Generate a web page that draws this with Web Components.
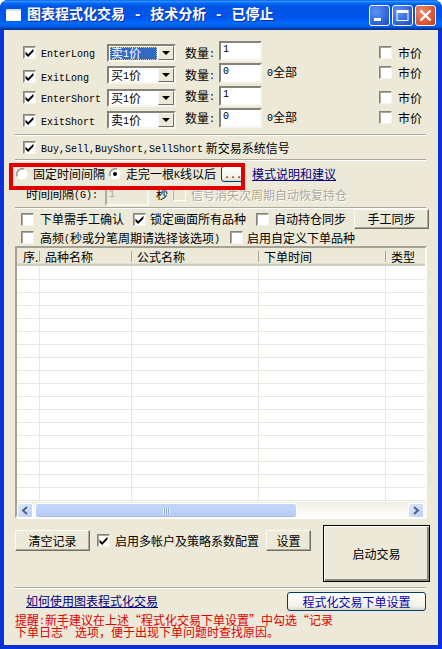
<!DOCTYPE html>
<html lang="zh-CN">
<head>
<meta charset="utf-8">
<title>图表程式化交易</title>
<style>
  html, body { margin: 0; background: #fff; }
  body { width: 442px; height: 649px; overflow: hidden; text-autospace: no-autospace; text-spacing-trim: space-all; }
</style>
<script>
  const UI_FONT = '"Noto Sans CJK SC", sans-serif'

  // small helper: registers an element with a shadow root built from css + html
  function define(tag, css, html) {
    customElements.define(tag, class extends HTMLElement {
      constructor() {
        super()
        this.attachShadow({ mode: 'open' })
      }
      connectedCallback() {
        const body = typeof html === 'function' ? html(this) : html
        this.shadowRoot.innerHTML = `<style>${css}</style>${body}`
      }
    })
  }

  // half width latin text, the dialog font draws these at 6px per char
  define('x-a', `:host { font: 10px/0 "Liberation Mono", monospace; vertical-align: 1px; }`, `<slot></slot>`)

  define('x-rule', `
    :host { display: block; height: 1px; margin: 0 12px 0 11px; background: #aca899; border-bottom: 1px solid #fff; }
  `, ``)

  const CHECK = `<svg width="9" height="9" viewBox="0 0 9 9"><path d="M0.5 3.6l2.6 2.6L8.5 0.8v2.8L3.1 9 0.5 6.4z" fill="#000"/></svg>`

  define('x-check', `
    :host { display: inline-flex; align-items: center; gap: var(--gap, 5px); font: 12px/12px ${UI_FONT}; white-space: nowrap; }
    .box {
      box-sizing: border-box; width: 13px; height: 13px; flex: none;
      display: flex; align-items: center; justify-content: center;
      background: #fff;
      border: 1px solid; border-color: #85837a #f4f3ec #f4f3ec #85837a;
      box-shadow: inset 1px 1px 0 #a9a79c;
    }
    :host([disabled]) .box { background: #ece9d8; border-color: #b5b2a4 #fff #fff #b5b2a4; box-shadow: none; }
    :host([disabled]) { color: #aca899; text-shadow: 1px 1px 0 #fff; }
  `, el => `<span class="box">${el.hasAttribute('checked') ? CHECK : ''}</span><span><slot></slot></span>`)

  define('x-radio', `
    :host { display: inline-flex; align-items: center; gap: 5px; font: 12px/12px ${UI_FONT}; white-space: nowrap; }
    svg { flex: none; display: block; }
  `, el => `<svg width="12" height="12" viewBox="0 0 12 12">
      <circle cx="6" cy="6" r="5.5" fill="#fff"/>
      <path d="M1.2 8.2A5.4 5.4 0 0 1 8.2 1.2" fill="none" stroke="#8f8d82" stroke-width="1.4"/>
      ${el.hasAttribute('checked') ? '<circle cx="6" cy="6" r="2" fill="#000"/>' : ''}
    </svg><span><slot></slot></span>`)

  define('x-button', `
    :host {
      box-sizing: border-box; display: inline-flex; align-items: center; justify-content: center;
      font: 12px/12px ${UI_FONT}; white-space: nowrap; background: #ece9d8;
      border: 1px solid; border-color: #fbfaf5 #716f64 #716f64 #fbfaf5;
      box-shadow: inset -1px -1px 0 #aca899;
    }
    :host([kind="default"]) {
      border: 1px solid #000; box-shadow: inset 1px 1px 0 #fff, inset -2px -2px 0 #8b897c;
    }
    :host([kind="xp"]) {
      border: 1px solid #003c74; border-radius: 3px;
      background: linear-gradient(#fff, #f3f2ea 75%, #dcd8c8);
      box-shadow: none;
    }
  `, `<span><slot></slot></span>`)

  define('x-field', `
    :host {
      box-sizing: border-box; display: block; width: 43px; height: 20px; padding: 1px 0 0 2px;
      background: #fff; font: 10px/12px "Liberation Mono", monospace;
      border: 2px solid; border-color: #84827a #f6f5ef #f6f5ef #84827a;
    }
    :host([disabled]) { background: #ece9d8; color: #aca899; border-color: #aeaba0 #f8f7f2 #f8f7f2 #aeaba0; width: 44px; }
  `, `<slot></slot>`)

  define('x-combo', `
    :host {
      box-sizing: border-box; display: flex; width: 69px; height: 18px;
      background: #fff; font: 12px/12px ${UI_FONT}; white-space: nowrap;
      border: 2px solid; border-color: #84827a #f6f5ef #f6f5ef #84827a;
    }
    .text { flex: 1; padding: 1px 0 0 1px; }
    .text span { display: inline-block; padding: 0 2px 0 1px; height: 13px; width: 47px; box-sizing: border-box; }
    :host([selected]) .text span { background: #316ac5; color: #fff; outline: 1px dotted #c8c8a8; outline-offset: -1px; }
    .drop {
      box-sizing: border-box; width: 16px; flex: none; background: #ece9d8;
      border: 1px solid; border-color: #fbfaf5 #716f64 #716f64 #fbfaf5;
      display: flex; align-items: center; justify-content: center;
    }
    .drop i { width: 0; height: 0; border: 4px solid transparent; border-top-color: #000; border-bottom: 0; }
  `, `<div class="text"><span><slot></slot></span></div><div class="drop"><i></i></div>`)

  define('signal-row', `
    :host {
      display: grid; grid-template-columns: 84px 69px 43px 48px 112px auto;
      padding-left: 19px; align-items: start; font: 12px/12px ${UI_FONT};
    }
    .name { margin-top: var(--check-y, 4px); --gap: 5px; }
    x-combo { margin-top: 3px; }
    .qty { margin-top: var(--qty-y, 6px); padding-left: 9px; white-space: nowrap; }
    .note { margin-top: 3px; }
    .market { margin-top: var(--market-y, 4px); --gap: 6px; }
  `, el => `
    <x-check class="name" checked><x-a>${el.getAttribute('name')}</x-a></x-check>
    <x-combo ${el.hasAttribute('selected') ? 'selected' : ''}>${el.getAttribute('side')}<x-a>1</x-a>价</x-combo>
    <span class="qty">数量<x-a>:</x-a></span>
    <x-field>${el.getAttribute('qty')}</x-field>
    <span class="note">${el.hasAttribute('all') ? '<x-a>0</x-a>全部' : ''}</span>
    <x-check class="market">市价</x-check>
  `)

  define('xp-scrollbar', `
    :host {
      box-sizing: border-box; display: flex; height: 17px; padding: 0 1px 0 0; gap: 2px;
      background: linear-gradient(#f1efe3, #faf9f4 60%, #fff);
    }
    .arrow {
      box-sizing: border-box; width: 16px; height: 15px; margin-top: 1px; flex: none;
      border: 1px solid #fff; border-radius: 2px;
      background: linear-gradient(135deg, #dde7f9, #bdcff3);
      display: flex; align-items: center; justify-content: center;
    }
    .thumb {
      box-sizing: border-box; width: 262px; height: 15px; margin-top: 1px; flex: none;
      border: 1px solid #fff; border-radius: 3px; box-shadow: inset 0 -1px 0 #a4bbe8;
      background: linear-gradient(#c4d6f8, #b8cdf6);
      display: flex; align-items: center; justify-content: center;
    }
    .grip { width: 7px; height: 6px; background: repeating-linear-gradient(90deg, #eef3fd 0 1px, #8da9de 1px 2px); }
    .track { flex: 1; }
  `, `
    <div class="arrow"><svg width="8" height="9" viewBox="0 0 8 9"><path d="M6 1L2 4.5 6 8" fill="none" stroke="#4d6185" stroke-width="2"/></svg></div>
    <div class="thumb"><div class="grip"></div></div>
    <div class="track"></div>
    <div class="arrow"><svg width="8" height="9" viewBox="0 0 8 9"><path d="M2 1l4 3.5L2 8" fill="none" stroke="#4d6185" stroke-width="2"/></svg></div>
  `)

  define('x-listview', `
    :host {
      box-sizing: border-box; display: block; width: 412px; height: 272px; margin-left: 11px;
      background: #fff; font: 12px/12px ${UI_FONT};
      border: 2px solid; border-color: #a5a294 #fbfbf7 #fbfbf7 #a5a294;
    }
    .head, .rows { display: grid; grid-template-columns: 23px 92px 127px 127px 39px; }
    .head { height: 18px; background: #ece9d8; box-shadow: inset 0 -2px 0 #d0cdbd, inset 0 -3px 0 #e2dfd0; }
    .head span { box-sizing: border-box; padding: 3px 0 0 5px; white-space: nowrap; overflow: hidden; position: relative; }
    .head span:first-child { padding-left: 6px; }
    .head span:not(:last-child)::after { content: ""; position: absolute; right: 0; top: 3px; bottom: 4px; width: 1px; background: #aca899; }
    .rows {
      height: 236px;
      background: repeating-linear-gradient(#fff 0 12px, #eae8dc 12px 13px) 0 1px;
    }
    .rows i { border-right: 1px solid #eae8dc; }
  `, el => `
    <div class="head">${el.getAttribute('columns').split(',').map(c => `<span>${c}</span>`).join('')}</div>
    <div class="rows"><i></i><i></i><i></i><i></i><b></b></div>
    <xp-scrollbar></xp-scrollbar>
  `)

  define('trade-panel', `
    :host { display: block; font: 12px/12px ${UI_FONT}; color: #000; }
    signal-row { height: 22px; }
    signal-row.first { margin-top: 11px; }
    signal-row.tall { height: 23px; }
    x-rule.top { margin-top: 4px; }
    .row { display: flex; align-items: center; white-space: nowrap; }
    .sys { height: 23px; padding-left: 19px; }
    .modes { position: relative; height: 25px; box-sizing: border-box; padding: 0 0 0 12px; }
    .modes x-button { width: 24px; height: 16px; margin-left: 5px; }
    .modes x-radio + x-radio { margin-left: 4px; }
    .modes a, .help a { color: #000080; text-decoration: underline; }
    .modes a { margin-left: 7px; position: relative; z-index: 1; }
    .redbox {
      position: absolute; left: 5px; top: 2px; width: 236px; height: 27px;
      box-sizing: border-box; border: 4px solid #e00000; pointer-events: none;
    }
    .timer { height: 21px; align-items: flex-start; padding-left: 22px; }
    .timer > span, .timer x-check { margin-top: 2px; }
    .timer x-field { margin-left: 7px; }
    .timer .sec { margin-left: 7px; }
    .timer x-check { margin-left: 5px; --gap: 5px; }
    .opts { height: 20px; padding-left: 17px; }
    .opts x-check { --gap: 6px; }
    .opts x-button { width: 75px; height: 20px; margin-left: 8px; }
    .opts2 { height: 17px; padding-left: 17px; }
    .opts2 x-check { --gap: 6px; }
    .actions { height: 62px; margin-top: 7px; padding-left: 11px; align-items: flex-start; }
    .actions .low { margin-top: 5px; height: 21px; }
    .actions x-check { margin: 5px 0 0 7px; height: 21px; --gap: 5px; }
    .clear { width: 75px; }
    .set { width: 45px; margin-left: 7px; }
    .start { width: 107px; height: 57px; margin-left: 12px; }
    .help { height: 25px; padding: 3px 0 0 22px; box-sizing: border-box; justify-content: space-between; align-items: flex-start; }
    .help a { margin-top: 3px; }
    .help x-button { width: 139px; height: 19px; margin-right: 12px; color: #0000b4; }
    .tip { margin-left: 11px; color: #e00000; line-height: 12px; }
  `, `
    <signal-row class="first" name="EnterLong" side="卖" qty="1" selected style="--check-y:5px;--market-y:5px;--qty-y:6px"></signal-row>
    <signal-row class="tall" name="ExitLong" side="买" qty="0" all style="--check-y:7px;--market-y:3px;--qty-y:6px"></signal-row>
    <signal-row name="EnterShort" side="买" qty="1" style="--check-y:5px;--market-y:5px;--qty-y:4px"></signal-row>
    <signal-row name="ExitShort" side="卖" qty="0" all style="--check-y:6px;--market-y:3px;--qty-y:4px"></signal-row>
    <x-rule class="top"></x-rule>
    <div class="row sys">
      <x-check checked><x-a>Buy,Sell,BuyShort,SellShort</x-a> 新交易系统信号</x-check>
    </div>
    <x-rule></x-rule>
    <div class="row modes">
      <x-radio>固定时间间隔</x-radio>
      <x-radio checked>走完一根<x-a>K</x-a>线以后</x-radio>
      <x-button kind="xp"><x-a>...</x-a></x-button>
      <a>模式说明和建议</a>
      <div class="redbox"></div>
    </div>
    <div class="row timer">
      <span>时间间隔<x-a>(G):</x-a></span>
      <x-field disabled>1</x-field>
      <span class="sec">秒</span>
      <x-check disabled>信号消失次周期自动恢复持仓</x-check>
    </div>
    <x-rule></x-rule>
    <div class="row opts">
      <x-check>下单需手工确认</x-check>
      <x-check checked style="margin-left:9px;--gap:4px">锁定画面所有品种</x-check>
      <x-check style="margin-left:10px;--gap:5px">自动持仓同步</x-check>
      <x-button>手工同步</x-button>
    </div>
    <div class="row opts2">
      <x-check>高频<x-a>(</x-a>秒或分笔周期请选择该选项<x-a>)</x-a></x-check>
      <x-check style="margin-left:10px;--gap:4px">启用自定义下单品种</x-check>
    </div>
    <x-listview columns="序.,品种名称,公式名称,下单时间,类型"></x-listview>
    <div class="row actions">
      <x-button class="low clear">清空记录</x-button>
      <x-check checked>启用多帐户及策略系数配置</x-check>
      <x-button class="low set">设置</x-button>
      <x-button class="start" kind="default">启动交易</x-button>
    </div>
    <x-rule></x-rule>
    <div class="row help">
      <a>如何使用图表程式化交易</a>
      <x-button kind="xp">程式化交易下单设置</x-button>
    </div>
    <div class="tip">提醒<x-a>:</x-a>新手建议在上述“程式化交易下单设置”中勾选“记录<br>下单日志”选项，便于出现下单问题时查找原因。</div>
  `)

  define('xp-titlebar', `
    :host {
      box-sizing: border-box; display: flex; align-items: center; height: 30px; padding: 0 6px;
      border-radius: 8px 8px 0 0; color: #fff;
      background: linear-gradient(#0058ee 0, #3593ff 4%, #288eff 6%, #127dff 8%, #036ffc 10%, #0262ee 14%, #0057e5 20%, #0054e3 24%, #0055eb 56%, #005bf5 66%, #026afe 76%, #0062ef 86%, #0052d6 92%, #0040ab 94%, #003092 100%);
    }
    .icon { box-sizing: border-box; width: 15px; height: 12px; background: #fff; border-top: 2px solid #d5e4ff; border-radius: 1px; }
    .text { margin-left: 6px; flex: 1; font: bold 14px/16px "Liberation Mono", "Noto Sans CJK SC", sans-serif; white-space: pre; text-shadow: 1px 1px 0 #0f2f9c; }
    .btn {
      box-sizing: border-box; width: 21px; height: 21px; margin-left: 2px; border: 1px solid #fff; border-radius: 3px;
      background: radial-gradient(circle at 30% 30%, #5f93f5, #2b5fd8 70%, #1f49c0);
      display: flex; align-items: center; justify-content: center;
    }
    .btn.close { background: radial-gradient(circle at 30% 30%, #ec8d6c, #d8502c 70%, #b73a18); }
  `, el => `
    <span class="icon"></span>
    <span class="text">${el.getAttribute('text')}</span>
    <span class="btn"><svg width="15" height="15" viewBox="0 0 15 15"><rect x="2" y="10" width="7" height="3" fill="#fff"/></svg></span>
    <span class="btn"><svg width="15" height="15" viewBox="0 0 15 15"><path d="M1.5 2h12v11h-12zM2.5 5v7h10V5z" fill="#fff" fill-rule="evenodd"/></svg></span>
    <span class="btn close"><svg width="15" height="15" viewBox="0 0 15 15"><path d="M2.5 2.5l10 10M12.5 2.5l-10 10" stroke="#fff" stroke-width="2.4"/></svg></span>
  `)

  define('xp-window', `
    :host {
      box-sizing: border-box; width: 442px; height: 649px;
      border-radius: 8px 8px 0 0; background: #0831d9;
      display: flex; flex-direction: column;
    }
    .client {
      flex: 1; margin: 0 4px 4px 4px; background: #ece9d8; overflow: hidden;
    }
  `, el => `
    <xp-titlebar text="${el.getAttribute('caption')}"></xp-titlebar>
    <div class="client"><slot></slot></div>
  `)
</script>
</head>
<body>
  <xp-window caption="图表程式化交易 - 技术分析 - 已停止"><trade-panel></trade-panel></xp-window>
</body>
</html>
